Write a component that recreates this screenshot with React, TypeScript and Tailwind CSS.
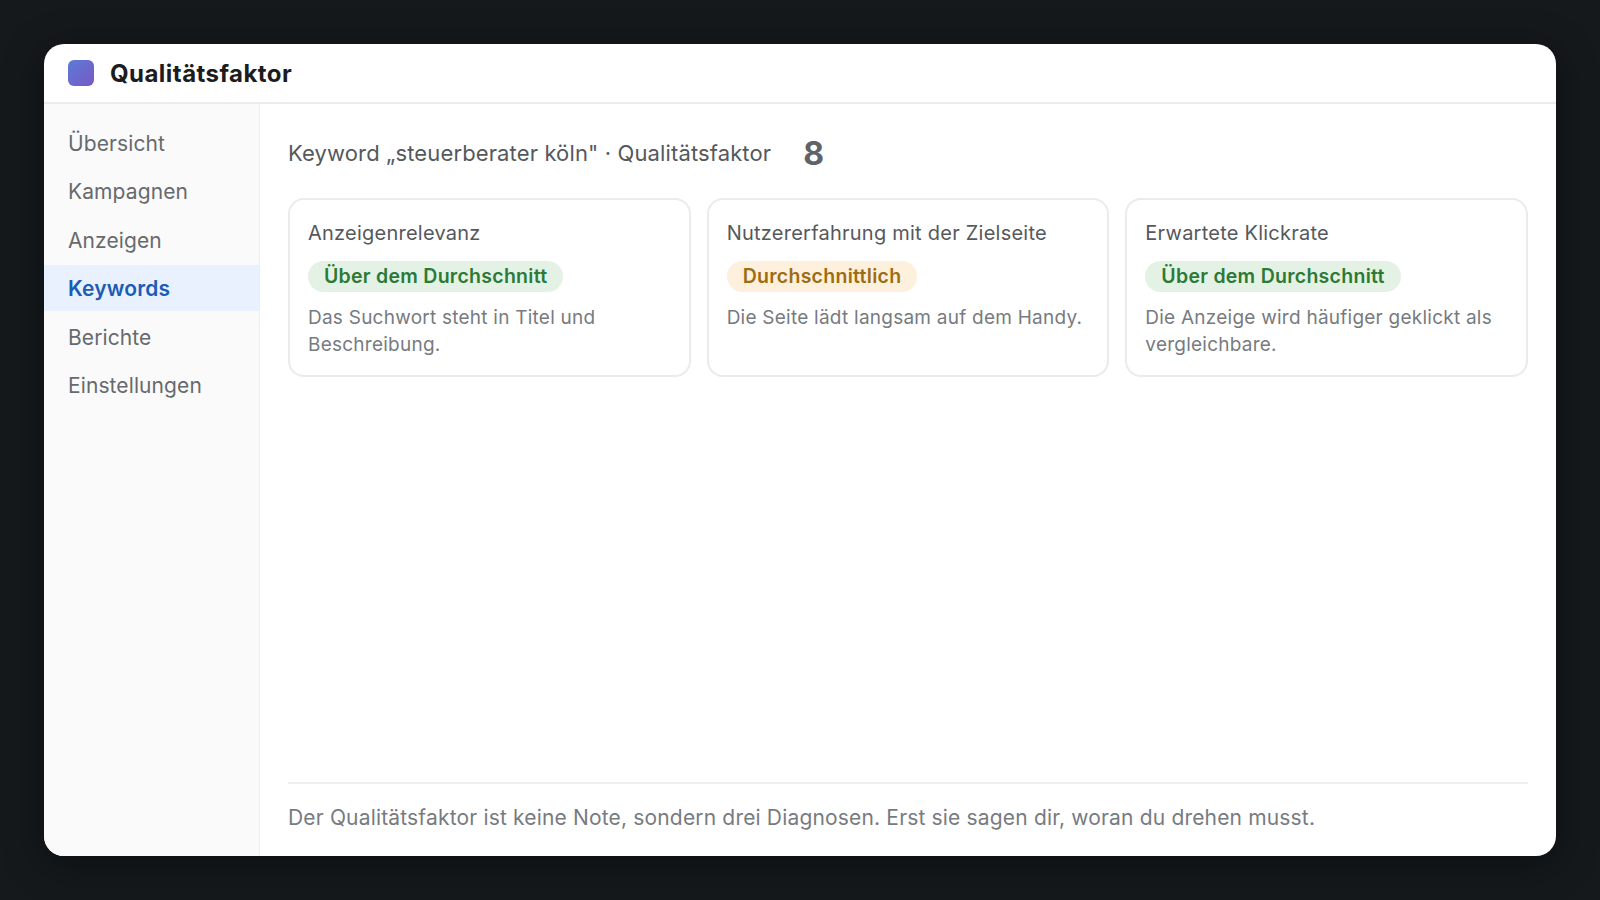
export default function App() {
  const nav = ["Übersicht", "Kampagnen", "Anzeigen", "Keywords", "Berichte", "Einstellungen"];
  const cards = [
    { t: "Anzeigenrelevanz", b: "Über dem Durchschnitt", g: true, d: "Das Suchwort steht in Titel und Beschreibung." },
    { t: "Nutzererfahrung mit der Zielseite", b: "Durchschnittlich", g: false, d: "Die Seite lädt langsam auf dem Handy." },
    { t: "Erwartete Klickrate", b: "Über dem Durchschnitt", g: true, d: "Die Anzeige wird häufiger geklickt als vergleichbare." },
  ];
  return (
    <div className="w-[1600px] h-[900px] bg-[#15191c] p-[44px] font-['Inter',sans-serif] overflow-hidden">
      <div className="w-full h-full bg-white rounded-[20px] overflow-hidden flex flex-col shadow-[0_8px_40px_rgba(0,0,0,0.4)]">
        <header className="h-[60px] shrink-0 border-b-2 border-[#ebebeb] flex items-center pl-6 gap-4">
          <div className="w-[26px] h-[26px] rounded-[6px] bg-gradient-to-br from-[#5a7bd8] to-[#7558c4]" />
          <div className="text-[24px] font-bold text-[#1c1c1e] leading-none tracking-[0.45px] pt-[2px]">Qualitätsfaktor</div>
        </header>
        <div className="flex-1 flex min-h-0">
          <aside className="w-[216px] shrink-0 bg-[#fafafa] border-r border-[#ededed] pt-[15px] flex flex-col">
            {nav.map((n) => (
              <div
                key={n}
                className={
                  n === "Keywords"
                    ? "h-[46px] mb-[2.5px] flex items-center pl-6 pt-[3px] text-[21px] tracking-[0.15px] font-semibold text-[#1c5cb4] bg-[#e8f1fd]"
                    : "h-[46px] mb-[2.5px] flex items-center pl-6 pt-[3px] text-[21px] tracking-[0.1px] text-[#666a6e]"
                }
              >
                {n}
              </div>
            ))}
          </aside>
          <main className="flex-1 px-7 flex flex-col min-w-0">
            <div className="h-[94px] shrink-0 flex items-center pt-[4px]">
              <span className="text-[22px] tracking-[0.13px] text-[#55595c]">Keyword „steuerberater köln" · Qualitätsfaktor</span>
              <span className="ml-8 text-[32px] font-bold text-[#5f6368] pt-[2px] tracking-[0.5px]">8</span>
            </div>
            <div className="grid grid-cols-3 gap-4">
              {cards.map((c) => (
                <div key={c.t} className="h-[179px] border-2 border-[#ebebeb] rounded-[16px] px-[18px] pt-[18px]">
                  <div className="text-[20px] leading-[30px] tracking-[0.24px] text-[#55595c]">{c.t}</div>
                  <div
                    className={
                      c.g
                        ? "inline-block mt-[13px] px-4 rounded-full text-[19.5px] leading-[31px] tracking-[0.27px] font-semibold bg-[#e4f2e5] text-[#2c7a35]"
                        : "inline-block mt-[13px] px-4 rounded-full text-[19.5px] leading-[31px] tracking-[0.27px] font-semibold bg-[#fdf0dc] text-[#9e6c12]"
                    }
                  >
                    {c.b}
                  </div>
                  <p className="mt-[12px] text-[19px] leading-[27px] tracking-[0.24px] text-[#777b7f]">{c.d}</p>
                </div>
              ))}
            </div>
            <div className="mt-auto h-[74px] shrink-0 border-t-2 border-[#f0f0f0] flex items-center pb-[4px]">
              <span className="text-[21px] tracking-[0.17px] text-[#777b7f]">
                Der Qualitätsfaktor ist keine Note, sondern drei Diagnosen. Erst sie sagen dir, woran du drehen musst.
              </span>
            </div>
          </main>
        </div>
      </div>
    </div>
  );
}
